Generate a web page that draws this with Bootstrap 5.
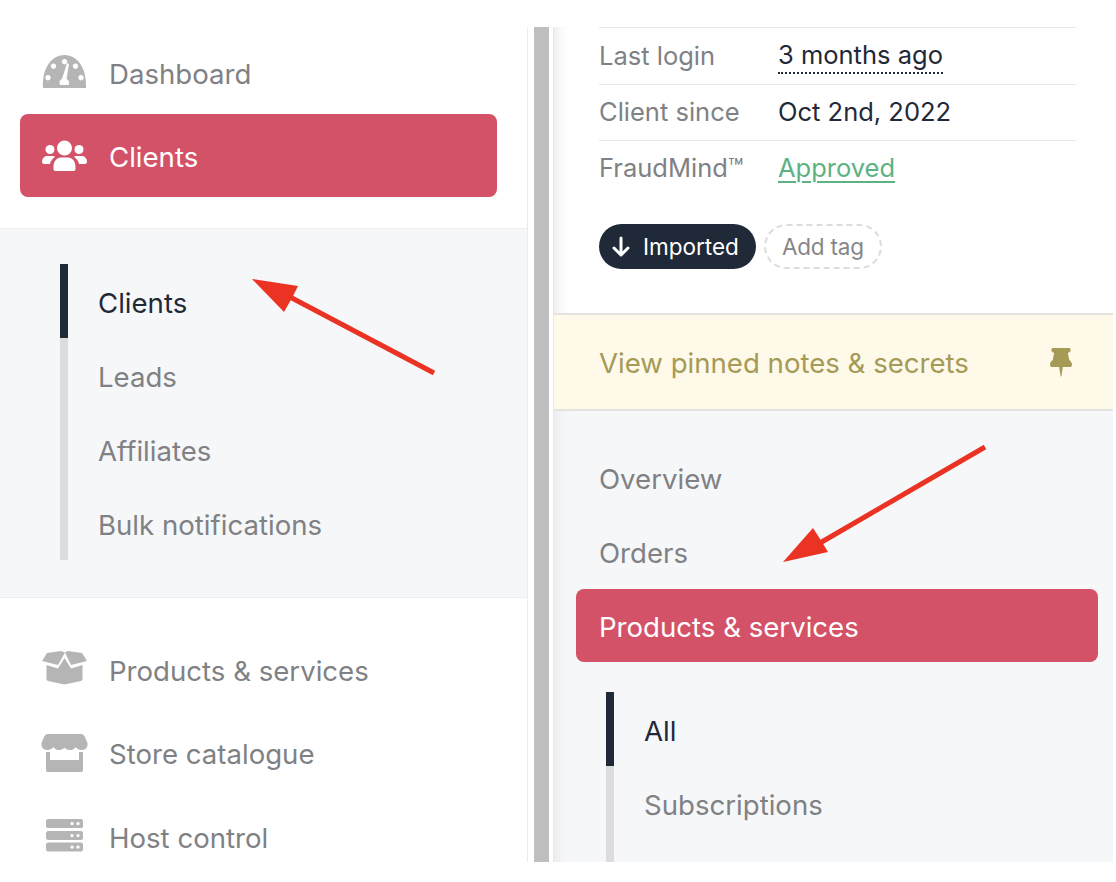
<!DOCTYPE html>
<html lang="en">
<head>
  <meta charset="UTF-8">
  <title>Clients</title>
  <meta name="viewport" content="width=device-width, initial-scale=1">
  <link href="https://cdn.jsdelivr.net/npm/bootstrap@5.3.3/dist/css/bootstrap.min.css" rel="stylesheet">
  <style>
    html, body { height: 100%; }
    body { background: #fff; font-family: Inter, "Noto Sans", sans-serif; font-size: 27.6px; color: #808184; overflow: hidden; }
    .shot { height: 882px; padding: 27px 3px 20px 0; position: relative; }
    .pane-left { width: 528px; border-right: 1px solid #ececee; padding-top: 4px; overflow: hidden; }
    .pane-gap { width: 25px; padding: 0 4px 0 6px; }
    .pane-gap div { background: #bfbfbf; height: 100%; }
    .pane-right { flex: 1; overflow: hidden; box-shadow: inset 14px 0 14px -12px #e6e6e9; border-left: 1px solid #e8e8e8; }
    .side-item { height: 83px; margin: 0 30px 0 20px; padding: 2px 0 0 21px; gap: 21px; border-radius: 8px; color: #808184; text-decoration: none; }
    .side-item span { padding-top: 2px; }
    .side-item svg { width: 47px; height: 47px; flex: none; fill: #b5b5b5; }
    .side-item.on { background: #d45268; color: #fff; }
    .side-item.on svg { fill: #fff; }
    .side-item.last-item { margin-top: 1px; }
    .side-item.last-item svg { margin-top: 4px; }
    .sub-wrap { background: #f6f7f9; border-block: 1px solid #eeeff1; margin: 31px 0 30px; padding: 35px 0; height: 370px; }
    .sub-list { margin-left: 60px; border-left: 8px solid #dcdcde; }
    .sub-item { height: 74px; padding: 5px 0 0 30px; margin-left: -8px; border-left: 8px solid transparent; color: #808184; text-decoration: none; }
    .sub-item.on { border-left-color: #1f2937; color: #1f2937; }
    .info-wrap { padding: 0 37px 0 45px; font-size: 25.5px; }
    .info-row { border-top: 1px solid #e9e9ea; height: 56px; }
    .info-row:first-child { height: 57px; }
    .info-key { width: 179px; color: #808184; }
    .info-val { color: #1f2937; }
    .info-val.dots { border-bottom: 2px dotted #1f2937; line-height: 34px; }
    .info-val.ok { color: #5cb283; text-decoration: underline; text-underline-offset: 4px; text-decoration-thickness: 2px; }
    .tag-row { padding: 28px 0 44px 45px; gap: 8px; font-size: 22.5px; }
    .tag-pill { height: 45px; border-radius: 23px; padding: 0 17px 0 12px; gap: 12px; background: #1f2937; color: #fff; }
    .tag-add { height: 45px; border-radius: 23px; padding: 0 16px; border: 2px dashed #dcdcdc; color: #858688; letter-spacing: -.2px; }
    .pin-band { height: 98px; background: #fef9e8; border-block: 2px solid #e3e3e1; padding: 3px 41px 0 45px; color: #a59a56; }
    .pin-band svg { width: 22px; height: 30px; fill: #a59a56; margin-top: -3px; }
    .prod-wrap { background: #f6f7f9; padding: 30px 15px 0 22px; height: 452px; box-shadow: inset 14px 0 14px -12px #e6e6e9; }
    .prod-item { height: 74px; padding: 4px 0 0 23px; color: #808184; text-decoration: none; border-radius: 8px; }
    .prod-item.on { background: #d45268; color: #fff; height: 73px; }
    .prod-sub { margin: 30px 0 0 30px; border-left: 8px solid #dcdcde; min-height: 200px; }
    .arrow-layer { position: absolute; left: 0; top: 0; width: 1116px; height: 882px; pointer-events: none; }
  </style>
</head>
<body>
  <div class="shot d-flex">
    <!-- left menu -->
    <div class="pane-left">
      <a class="side-item d-flex align-items-center" href="#">
        <svg viewBox="0 0 47 47"><path fill-rule="evenodd" d="M2 38 C1 16 12 5 23.500 5 C35 5 46 16 45 38 Z M23.500 9 a2.700 2.700 0 1 0 .01 0 Z M12.500 13.500 a2.700 2.700 0 1 0 .01 0 Z M34.500 13.500 a2.700 2.700 0 1 0 .01 0 Z M7 25 a2.700 2.700 0 1 0 .01 0 Z M40 25 a2.700 2.700 0 1 0 .01 0 Z M26 13 L21 29 C18 30 18 34 19.500 35 L27.500 35 C29 33 28 30 25.500 29 L28 14 Z"/></svg>
        <span>Dashboard</span>
      </a>
      <a class="side-item on d-flex align-items-center" href="#">
        <svg viewBox="0 0 47 47"><circle cx="23.500" cy="15" r="7.500"/><circle cx="9" cy="16.500" r="4.500"/><circle cx="38" cy="16.500" r="4.500"/><path d="M12.500 36 C12 28 16 24.500 20 24.500 L27 24.500 C31 24.500 35 28 34.500 36 C34.500 37.500 33.500 38 32 38 L15 38 C13.500 38 12.500 37.500 12.500 36 Z"/><path d="M9 31 L3.500 31 C1.500 31 1 30 1 28 C1.500 25 3.500 23 6 23 L12 23 C13 23 13.500 23.500 14 24 C11.500 25.500 9.500 28 9 31 Z"/><path d="M38 31 L43.500 31 C45.500 31 46 30 46 28 C45.500 25 43.500 23 41 23 L35 23 C34 23 33.500 23.500 33 24 C35.500 25.500 37.500 28 38 31 Z"/></svg>
        <span>Clients</span>
      </a>
      <div class="sub-wrap">
        <div class="sub-list">
          <a class="sub-item on d-flex align-items-center" href="#">Clients</a>
          <a class="sub-item d-flex align-items-center" href="#">Leads</a>
          <a class="sub-item d-flex align-items-center" href="#">Affiliates</a>
          <a class="sub-item d-flex align-items-center" href="#">Bulk notifications</a>
        </div>
      </div>
      <a class="side-item d-flex align-items-center" href="#">
        <svg viewBox="0 0 47 47"><path d="M1 14 L6 6 L20 4 L24 5.500 L17 18 Z"/><path d="M46 14 L41 6 L27 4 L24 5.500 L30 18 Z"/><path d="M23.500 11 L17 21.500 L5.500 18 L5.500 32 C5.500 33 6 33.500 7 34 L23.500 37.500 L40 34 C41 33.500 41.500 33 41.500 32 L41.500 18 L30 21.500 Z"/></svg>
        <span>Products &amp; services</span>
      </a>
      <a class="side-item d-flex align-items-center" href="#">
        <svg viewBox="0 0 47 47"><path d="M7 4 L40 4 C42 4 43 5 44 7 L46.500 13 C47 18 44 20 41 20 C38 20 36 19 34.500 17 C33 19.500 31 20 28.500 20 C26.500 20 24.500 19 23.500 17.500 C22.500 19 20.500 20 18.500 20 C16 20 14 19.500 12.500 17 C11 19 9 20 6 20 C3 20 0 18 .5 13 L3 7 C4 5 5 4 7 4 Z"/><path d="M5 22 L9 22 L9 30 L38 30 L38 22 L42 22 L42 40 C42 41.500 41 42 40 42 L7 42 C6 42 5 41.500 5 40 Z"/></svg>
        <span>Store catalogue</span>
      </a>
      <a class="side-item last-item d-flex align-items-center" href="#">
        <svg viewBox="0 0 47 47"><path fill-rule="evenodd" d="M7 3 L40 3 C41.500 3 42 4 42 5 L42 10 C42 11.500 41.500 12 40 12 L7 12 C6 12 5 11.500 5 10 L5 5 C5 4 6 3 7 3 Z M31 6 a1.600 1.600 0 1 0 .01 0 Z M37 6 a1.600 1.600 0 1 0 .01 0 Z M7 15 L40 15 C41.500 15 42 16 42 17 L42 21.500 C42 23 41.500 24 40 24 L7 24 C6 24 5 23 5 21.500 L5 17 C5 16 6 15 7 15 Z M31 18 a1.600 1.600 0 1 0 .01 0 Z M37 18 a1.600 1.600 0 1 0 .01 0 Z M7 26.500 L40 26.500 C41.500 26.500 42 27.500 42 28.500 L42 33 C42 34.500 41.500 35.500 40 35.500 L7 35.500 C6 35.500 5 34.500 5 33 L5 28.500 C5 27.500 6 26.500 7 26.500 Z M31 29.500 a1.600 1.600 0 1 0 .01 0 Z M37 29.500 a1.600 1.600 0 1 0 .01 0 Z"/></svg>
        <span>Host control</span>
      </a>
    </div>
    <div class="pane-gap"><div></div></div>
    <!-- right client panel -->
    <div class="pane-right">
      <div class="info-wrap">
        <div class="info-row d-flex align-items-center"><div class="info-key">Last login</div><div class="info-val dots">3 months ago</div></div>
        <div class="info-row d-flex align-items-center"><div class="info-key">Client since</div><div class="info-val">Oct 2nd, 2022</div></div>
        <div class="info-row d-flex align-items-center"><div class="info-key">FraudMind™</div><div class="info-val ok">Approved</div></div>
      </div>
      <div class="tag-row d-flex">
        <div class="tag-pill d-flex align-items-center">
          <svg width="20" height="22" viewBox="0 0 20 22" fill="none" stroke="#fff" stroke-width="3" stroke-linecap="round" stroke-linejoin="round"><path d="M10 2 L10 19 M3 12 L10 19 L17 12"/></svg>
          <span>Imported</span>
        </div>
        <div class="tag-add d-flex align-items-center">Add tag</div>
      </div>
      <div class="pin-band d-flex align-items-center justify-content-between">
        <span>View pinned notes &amp; secrets</span>
        <svg viewBox="0 0 24 30" preserveAspectRatio="none"><path d="M3 1 L21 1 C22 1 22.500 2 22.500 3 C22.500 5 21 5.500 19.500 6 L21 13 C23 14 24 16 24 18 C24 19 23 20 22 20 L14 20 L12.500 29 C12 30 12 30 11.500 29 L10 20 L2 20 C1 20 0 19 0 18 C0 16 1 14 3 13 L4.500 6 C3 5.500 1.500 5 1.500 3 C1.500 2 2 1 3 1 Z"/></svg>
      </div>
      <div class="prod-wrap">
        <a class="prod-item d-flex align-items-center" href="#">Overview</a>
        <a class="prod-item d-flex align-items-center" href="#">Orders</a>
        <a class="prod-item on d-flex align-items-center" href="#">Products &amp; services</a>
        <div class="prod-sub">
          <a class="sub-item on d-flex align-items-center" href="#">All</a>
          <a class="sub-item d-flex align-items-center" href="#">Subscriptions</a>
        </div>
      </div>
    </div>
    <!-- red annotation arrows lie over the panels -->
    <svg class="arrow-layer" viewBox="0 0 1116 882">
      <path d="M434 373 L290 297" stroke="#ea3323" stroke-width="5" fill="none"/>
      <path d="M252 279 L298 286 L292 298 L284 312 Z" fill="#ea3323"/>
      <path d="M985 447 L820 543" stroke="#ea3323" stroke-width="5" fill="none"/>
      <path d="M783 562 L813 528 L822 542 L828 552 Z" fill="#ea3323"/>
    </svg>
  </div>
  <script src="https://cdn.jsdelivr.net/npm/bootstrap@5.3.3/dist/js/bootstrap.bundle.min.js"></script>
</body>
</html>
